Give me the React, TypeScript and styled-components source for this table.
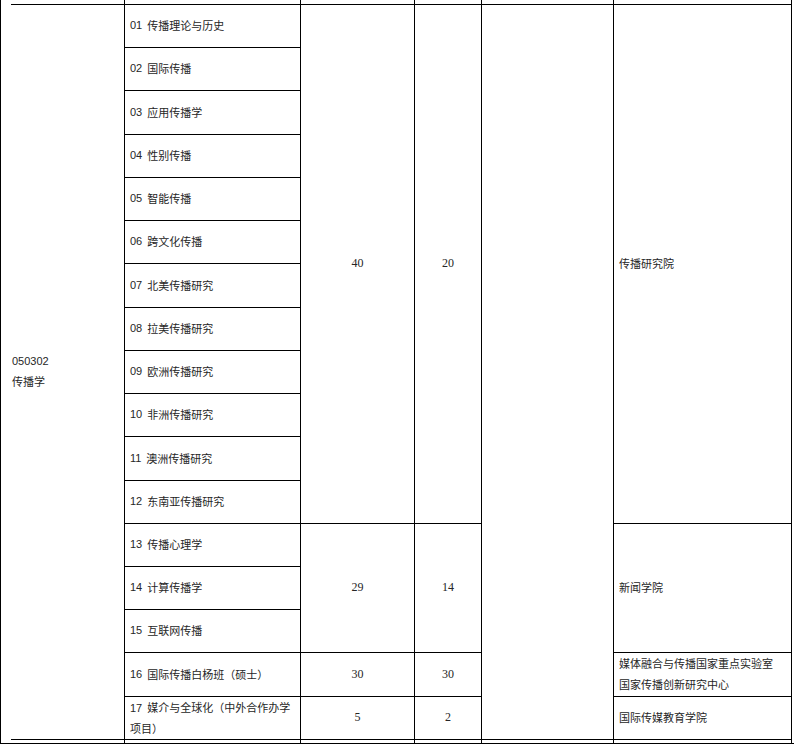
import styled, { createGlobalStyle } from "styled-components";

const GlobalStyle = createGlobalStyle`
  html, body {
    margin: 0;
    padding: 0;
    background: #ffffff;
  }
  body {
    font-family: "Noto Sans CJK SC", "Noto Sans", sans-serif;
  }
`;

// heights of the 17 body rows, in px (the 1px rules sit between them)
const ROW_HEIGHTS = [42, 42, 43, 42, 42, 42, 43, 42, 42, 42, 43, 42, 42, 42, 42, 43, 42];
const FIRST_ROW = 3; // grid rows 1 and 2 are the cut-off sliver above
const LAST_ROW = FIRST_ROW + ROW_HEIGHTS.length; // sliver below

const Sheet = styled.div`
  display: grid;
  width: 794px;
  box-sizing: border-box;
  grid-template-columns: 5px 117px 175px 113px 66px 131px 177px 1px;
  grid-template-rows: 1px 2px ${ROW_HEIGHTS.map((h) => `${h}px`).join(" ")} 3px;
  gap: 1px;
  background: #000000;
  border-left: 1px solid #000000;
  border-right: 1px solid #000000;
  border-bottom: 1px solid #000000;
`;

const Cell = styled.div<{
  $col: number;
  $row: number;
  $rowSpan?: number;
  $center?: boolean;
}>`
  grid-column: ${({ $col }) => $col} / span 1;
  grid-row: ${({ $row }) => $row} / span ${({ $rowSpan }) => $rowSpan ?? 1};
  background: #ffffff;
  display: flex;
  align-items: center;
  justify-content: ${({ $center }) => ($center ? "center" : "flex-start")};
  padding: 0 5px 2px;
  min-width: 0;
  min-height: 0;
  overflow: hidden;
  font-size: 11px;
  line-height: 20px;
  color: #262626;
  white-space: nowrap;
`;

const Count = styled.span`
  font-family: "Liberation Serif", "DejaVu Serif", serif;
  font-size: 12px;
`;

const Code = styled.span`
  font-family: "Liberation Sans", Arial, sans-serif;
  font-size: 11px;
`;

const Lines = styled.div<{ $gap?: number }>`
  display: flex;
  flex-direction: column;
  line-height: ${({ $gap }) => $gap ?? 20}px;
`;

const directions = [
  "传播理论与历史",
  "国际传播",
  "应用传播学",
  "性别传播",
  "智能传播",
  "跨文化传播",
  "北美传播研究",
  "拉美传播研究",
  "欧洲传播研究",
  "非洲传播研究",
  "澳洲传播研究",
  "东南亚传播研究",
  "传播心理学",
  "计算传播学",
  "互联网传播",
  "国际传播白杨班（硕士）",
];

const groups = [
  { start: 0, span: 12, total: "40", exempt: "20", unit: ["传播研究院"] },
  { start: 12, span: 3, total: "29", exempt: "14", unit: ["新闻学院"] },
  {
    start: 15,
    span: 1,
    total: "30",
    exempt: "30",
    unit: ["媒体融合与传播国家重点实验室", "国家传播创新研究中心"],
  },
  { start: 16, span: 1, total: "5", exempt: "2", unit: ["国际传媒教育学院"] },
];

const INNER_COLS = [2, 3, 4, 5, 6, 7];

export default function App() {
  return (
    <>
      <GlobalStyle />
      <Sheet>
        <Cell $col={1} $row={1} $rowSpan={LAST_ROW} />
        <Cell $col={8} $row={1} $rowSpan={LAST_ROW} />

        {INNER_COLS.map((c) => (
          <Cell key={`t1-${c}`} $col={c} $row={1} />
        ))}
        {INNER_COLS.map((c) => (
          <Cell key={`t2-${c}`} $col={c} $row={2} />
        ))}

        <Cell $col={2} $row={FIRST_ROW} $rowSpan={ROW_HEIGHTS.length}>
          <Lines>
            <Code>050302</Code>
            <span>传播学</span>
          </Lines>
        </Cell>

        {directions.map((name, i) => (
          <Cell key={name} $col={3} $row={FIRST_ROW + i}>
            <Code>{String(i + 1).padStart(2, "0")}</Code>&nbsp;&nbsp;{name}
          </Cell>
        ))}
        <Cell $col={3} $row={FIRST_ROW + 16}>
          <Lines>
            <span>
              <Code>17</Code>&nbsp;&nbsp;媒介与全球化（中外合作办学
            </span>
            <span>项目）</span>
          </Lines>
        </Cell>

        {groups.map((g) => (
          <Cell key={`n-${g.start}`} $col={4} $row={FIRST_ROW + g.start} $rowSpan={g.span} $center>
            <Count>{g.total}</Count>
          </Cell>
        ))}
        {groups.map((g) => (
          <Cell key={`m-${g.start}`} $col={5} $row={FIRST_ROW + g.start} $rowSpan={g.span} $center>
            <Count>{g.exempt}</Count>
          </Cell>
        ))}

        <Cell $col={6} $row={FIRST_ROW} $rowSpan={ROW_HEIGHTS.length} />

        {groups.map((g) => (
          <Cell key={`u-${g.start}`} $col={7} $row={FIRST_ROW + g.start} $rowSpan={g.span}>
            <Lines $gap={g.unit.length > 1 ? 21 : 20}>
              {g.unit.map((u) => (
                <span key={u}>{u}</span>
              ))}
            </Lines>
          </Cell>
        ))}

        {INNER_COLS.map((c) => (
          <Cell key={`b-${c}`} $col={c} $row={LAST_ROW} />
        ))}
      </Sheet>
    </>
  );
}
